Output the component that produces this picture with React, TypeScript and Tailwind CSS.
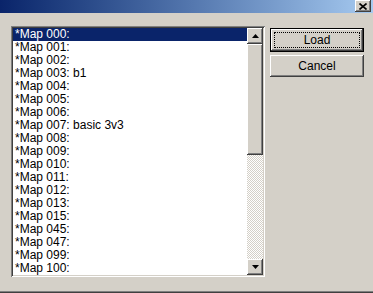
const maps = [
  '*Map 000:',
  '*Map 001:',
  '*Map 002:',
  '*Map 003: b1',
  '*Map 004:',
  '*Map 005:',
  '*Map 006:',
  '*Map 007: basic 3v3',
  '*Map 008:',
  '*Map 009:',
  '*Map 010:',
  '*Map 011:',
  '*Map 012:',
  '*Map 013:',
  '*Map 015:',
  '*Map 045:',
  '*Map 047:',
  '*Map 099:',
  '*Map 100:',
];

const raised =
  'shadow-[inset_-1px_-1px_#404040,inset_1px_1px_#ffffff,inset_-2px_-2px_#808080,inset_2px_2px_#d4d0c8]';

function Arrow({ up }: { up?: boolean }) {
  return (
    <svg width="7" height="4" viewBox="0 0 7 4">
      <path d={up ? 'M3.5 0 L7 4 L0 4 Z' : 'M0 0 L7 0 L3.5 4 Z'} fill="#000" />
    </svg>
  );
}

export default function App() {
  return (
    <div className="w-[373px] h-[293px] bg-[#d4d0c8] flex flex-col overflow-hidden font-['Liberation_Sans',Arial,sans-serif] text-[12px] text-black">
      {/* title bar */}
      <div className="h-[13px] shrink-0 bg-gradient-to-r from-[#0a246a] to-[#a6caf0] flex justify-end pr-[2px]">
        <div className={`w-[16px] h-[12px] bg-[#d4d0c8] ${raised} flex items-center justify-center`}>
          <svg width="8" height="7" viewBox="0 0 8 7">
            <path d="M0.5 0.5 L7.5 6.5 M7.5 0.5 L0.5 6.5" stroke="#000" strokeWidth="1.6" />
          </svg>
        </div>
      </div>

      <div className="flex-1 flex pt-[13px] pl-[11px] gap-[5px]">
        {/* list box */}
        <div className="w-[254px] h-[251px] shadow-[inset_1px_1px_#808080,inset_-1px_-1px_#ffffff,inset_2px_2px_#404040,inset_-2px_-2px_#d4d0c8] p-[2px] flex">
          <div className="flex-1 bg-white">
            {maps.map((m, i) => (
              <div
                key={m}
                className={`h-[13px] leading-[13px] pl-[2px] whitespace-nowrap ${i === 0 ? 'bg-[#0a246a] text-white' : ''}`}
              >
                {m}
              </div>
            ))}
          </div>
          <div className="w-[16px] flex flex-col">
            <div className={`h-[16px] bg-[#d4d0c8] ${raised} flex items-center justify-center`}>
              <Arrow up />
            </div>
            <div className={`h-[111px] bg-[#d4d0c8] ${raised}`} />
            <div className="flex-1 bg-[repeating-conic-gradient(#ffffff_0_25%,#d4d0c8_0_50%)] bg-[length:2px_2px]" />
            <div className={`h-[16px] bg-[#d4d0c8] ${raised} flex items-center justify-center`}>
              <Arrow />
            </div>
          </div>
        </div>

        {/* buttons */}
        <div className="w-[94px] flex flex-col gap-[3px] pt-[2px]">
          <div className="h-[24px] border border-black shadow-[inset_-1px_-1px_#404040,inset_1px_1px_#ffffff,inset_-2px_-2px_#808080] p-[3px]">
            <div className="h-full border border-dotted border-black flex items-center justify-center">Load</div>
          </div>
          <div className={`h-[22px] ${raised} flex items-center justify-center`}>Cancel</div>
        </div>
      </div>

      <div className="h-[2px] shrink-0 border-t border-[#808080] bg-[#404040]" />
    </div>
  );
}
